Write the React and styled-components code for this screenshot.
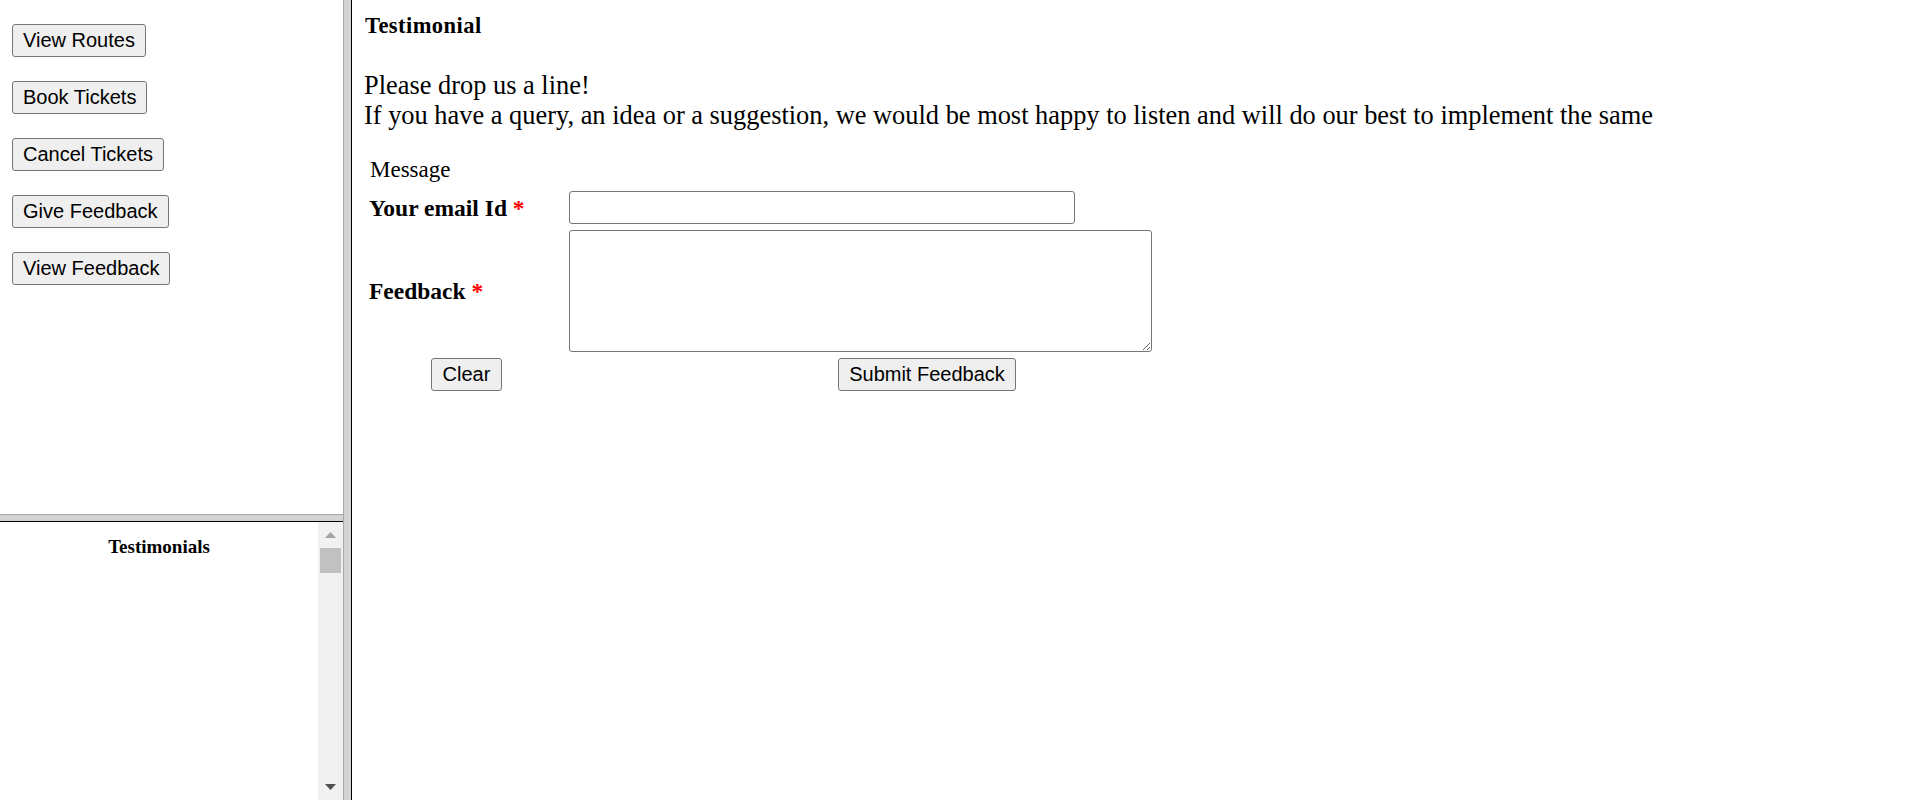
import React from "react";
import styled, { createGlobalStyle } from "styled-components";

const GlobalStyle = createGlobalStyle`
  html, body {
    margin: 0;
    padding: 0;
    background: #ffffff;
    overflow: hidden;
  }
  body {
    font-family: "Liberation Serif", "Times New Roman", serif;
    color: #000000;
  }
`;

const Page = styled.div`
  display: flex;
  width: 1920px;
  height: 800px;
`;

const LeftColumn = styled.div`
  width: 343px;
  flex-shrink: 0;
  display: flex;
  flex-direction: column;
`;

const NavFrame = styled.nav`
  height: 514px;
  box-sizing: border-box;
  padding: 24px 0 0 12px;
  display: flex;
  flex-direction: column;
  align-items: flex-start;
  gap: 24px;
`;

const Button = styled.button`
  font-family: "Liberation Sans", Arial, sans-serif;
  font-size: 20px;
  line-height: 23px;
  height: 33px;
  padding: 0 10px;
  box-sizing: border-box;
  color: #000000;
  background: #efefef;
  border: 1px solid #767676;
  border-radius: 3px;
  white-space: nowrap;
  cursor: pointer;
`;

const HSplitter = styled.div`
  height: 8px;
  box-sizing: border-box;
  background: #d3d3d3;
  border-top: 1px solid #a9a9a9;
  border-bottom: 1px solid #000000;
`;

const VSplitter = styled.div`
  width: 9px;
  flex-shrink: 0;
  box-sizing: border-box;
  background: #d3d3d3;
  border-left: 1px solid #a9a9a9;
  border-right: 1px solid #000000;
`;

const BottomFrame = styled.div`
  flex: 1;
  display: flex;
  min-height: 0;
`;

const TestimonialsPane = styled.div`
  flex: 1;
  padding-top: 14px;
`;

const PaneHeading = styled.div`
  font-size: 19px;
  font-weight: bold;
  line-height: 22px;
  text-align: center;
`;

const Scrollbar = styled.div`
  width: 25px;
  flex-shrink: 0;
  background: #f1f1f1;
  display: flex;
  flex-direction: column;
`;

const ScrollArrow = styled.div`
  height: 26px;
  display: flex;
  align-items: center;
  justify-content: center;
`;

const ScrollTrack = styled.div`
  flex: 1;
  padding: 0 2px;
`;

const ScrollThumb = styled.div`
  height: 25px;
  background: #c1c1c1;
`;

const RightFrame = styled.main`
  flex: 1;
  box-sizing: border-box;
  padding: 13px 0 0 12px;
`;

const Title = styled.div`
  font-size: 22.5px;
  font-weight: bold;
  line-height: 25px;
  letter-spacing: 0.45px;
  margin-left: 1px;
`;

const Intro = styled.div`
  margin-top: 33px;
  font-size: 26.4px;
  line-height: 29.5px;
  white-space: nowrap;
`;

const Caption = styled.div`
  margin: 28px 0 9px 6px;
  font-size: 23px;
  line-height: 24px;
`;

const FormGrid = styled.form`
  margin-left: 4px;
  display: grid;
  grid-template-columns: 197px 716px;
  column-gap: 4px;
  row-gap: 6px;
  align-items: center;
`;

const Label = styled.label`
  padding-left: 1px;
  font-size: 23.5px;
  font-weight: bold;
  line-height: 26px;
`;

const Required = styled.span`
  color: #ff0000;
`;

const TextInput = styled.input`
  width: 506px;
  height: 33px;
  box-sizing: border-box;
  border: 1px solid #767676;
  border-radius: 3px;
  padding: 2px 4px;
  font-family: "Liberation Sans", Arial, sans-serif;
  font-size: 20px;
`;

const TextArea = styled.textarea`
  width: 583px;
  height: 122px;
  box-sizing: border-box;
  border: 1px solid #767676;
  border-radius: 3px;
  padding: 2px;
  font-family: "Liberation Mono", monospace;
  font-size: 20px;
`;

const CellButton = styled(Button)`
  justify-self: center;
  padding: 0 ${(p) => (p.$wide ? 11 : 10)}px;
`;

const Triangle = ({ up, color }) => (
  <svg width="11" height="6" viewBox="0 0 11 6">
    <polygon points={up ? "5.5,0 11,6 0,6" : "0,0 11,0 5.5,6"} fill={color} />
  </svg>
);

export default function App() {
  const navItems = [
    "View Routes",
    "Book Tickets",
    "Cancel Tickets",
    "Give Feedback",
    "View Feedback",
  ];

  return (
    <>
      <GlobalStyle />
      <Page>
        <LeftColumn>
          <NavFrame>
            {navItems.map((item) => (
              <Button key={item} type="button">
                {item}
              </Button>
            ))}
          </NavFrame>
          <HSplitter />
          <BottomFrame>
            <TestimonialsPane>
              <PaneHeading>Testimonials</PaneHeading>
            </TestimonialsPane>
            <Scrollbar>
              <ScrollArrow>
                <Triangle up color="#a3a3a3" />
              </ScrollArrow>
              <ScrollTrack>
                <ScrollThumb />
              </ScrollTrack>
              <ScrollArrow>
                <Triangle color="#505050" />
              </ScrollArrow>
            </Scrollbar>
          </BottomFrame>
        </LeftColumn>
        <VSplitter />
        <RightFrame>
          <Title>Testimonial</Title>
          <Intro>
            Please drop us a line!
            <br />
            If you have a query, an idea or a suggestion, we would be most happy
            to listen and will do our best to implement the same
          </Intro>
          <Caption>Message</Caption>
          <FormGrid onSubmit={(e) => e.preventDefault()}>
            <Label htmlFor="email">
              Your email Id <Required>*</Required>
            </Label>
            <TextInput id="email" type="text" />
            <Label htmlFor="feedback">
              Feedback <Required>*</Required>
            </Label>
            <TextArea id="feedback" />
            <CellButton type="reset" $wide>
              Clear
            </CellButton>
            <CellButton type="submit">Submit Feedback</CellButton>
          </FormGrid>
        </RightFrame>
      </Page>
    </>
  );
}
